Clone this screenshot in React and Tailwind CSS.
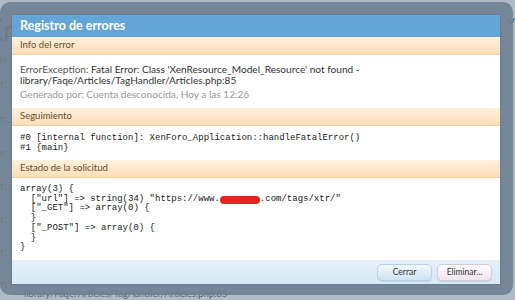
import React from 'react';

function SectionHead({ children }) {
  return (
    <div className="h-[18px] flex items-center px-2 bg-gradient-to-b from-[#fff0dd] to-[#fcdfb8] border-b border-[#f2cf9f] text-[9.5px] text-[#6b4b2b]">
      {children}
    </div>
  );
}

const requestLines = [
  'array(3) {',
  null,
  '  ["_GET"] => array(0) {',
  '  }',
  '  ["_POST"] => array(0) {',
  '  }',
  '}',
];

export default function App() {
  return (
    <div className="relative w-[515px] h-[300px] overflow-hidden bg-[#aebbc5] font-['Lato','Liberation_Sans',sans-serif]">
      {/* page behind the overlay */}
      <div className="absolute inset-0 text-[#44525d]">
        <div className="absolute left-[-14px] top-[14px] text-[30px] leading-none">Err</div>
        <div className="absolute left-[-4px] top-[52px] text-[10px]">de</div>
        {[76, 111, 145, 178, 211, 244, 276].map((t) => (
          <div key={t} className="absolute left-[-6px] text-[11px]" style={{ top: t }}>or:</div>
        ))}
        <div className="absolute left-[18px] top-[287px] text-[9.5px] text-[#56646f]">- library/Faqe/Articles/TagHandler/Articles.php:85</div>
        <div className="absolute left-[508px] top-[14px] text-[10px]">V</div>
      </div>

      {/* overlay frame */}
      <div className="absolute left-0 top-[2px] w-[513px] h-[293px] rounded-[10px] bg-[#6e8191]/[0.9] pl-[12px] pt-[13px]">
        <div className="w-[488px] h-[269px] flex flex-col bg-white shadow-[0_0_2px_rgba(0,0,0,0.2)]">
          <div className="h-[22px] flex items-center px-2 bg-[#63a5d7] text-white text-[12.5px] font-bold">
            Registro de errores
          </div>

          <SectionHead>Info del error</SectionHead>
          <div className="h-[53px] px-2 pt-[9px] text-[10.1px] leading-[11px] text-[#333]">
            <div><span className="text-[#555]">ErrorException:</span> Fatal Error: Class 'XenResource_Model_Resource' not found -</div>
            <div>library/Faqe/Articles/TagHandler/Articles.php:85</div>
            <div className="mt-[3px] text-[#9a9a9a]">Generado por: Cuenta desconocida, Hoy a las 12:26</div>
          </div>

          <SectionHead>Seguimiento</SectionHead>
          <div className="h-[34px] px-2 pt-[7px] font-['Liberation_Mono',monospace] text-[9px] leading-[10px] text-[#222] whitespace-pre">
            <div>#0 [internal function]: XenForo_Application::handleFatalError()</div>
            <div>#1 {'{main}'}</div>
          </div>

          <SectionHead>Estado de la solicitud</SectionHead>
          <div className="flex-1 px-2 pt-[7px] font-['Liberation_Mono',monospace] text-[9px] leading-[9.7px] text-[#222] whitespace-pre">
            {requestLines.map((line, i) =>
              line === null ? (
                <div key={i} className="flex items-center">
                  <span>{'  ["url"] => string(34) "https://www.'}</span>
                  <span className="w-[40px] h-[8px] rounded-[4px] bg-[#e5231f]" />
                  <span>{'.com/tags/xtr/"'}</span>
                </div>
              ) : (
                <div key={i}>{line}</div>
              )
            )}
          </div>

          <div className="h-[24px] flex items-center justify-end gap-[5px] pr-[8px] bg-gradient-to-b from-[#e3f1fa] to-[#d6eaf7]">
            <button className="w-[55px] h-[17px] rounded-[5px] border border-[#bcd3e3] bg-gradient-to-b from-[#f0f7fc] to-[#cfe3f1] text-[8.5px] text-[#333] shadow-[0_1px_1px_rgba(0,0,0,0.1)]">
              Cerrar
            </button>
            <button className="w-[55px] h-[17px] rounded-[5px] border border-[#d6cdd8] bg-gradient-to-b from-[#fdf9fc] to-[#f1e6ef] text-[8.5px] text-[#333] shadow-[0_1px_1px_rgba(0,0,0,0.1)]">
              Eliminar...
            </button>
          </div>
        </div>
      </div>
    </div>
  );
}
